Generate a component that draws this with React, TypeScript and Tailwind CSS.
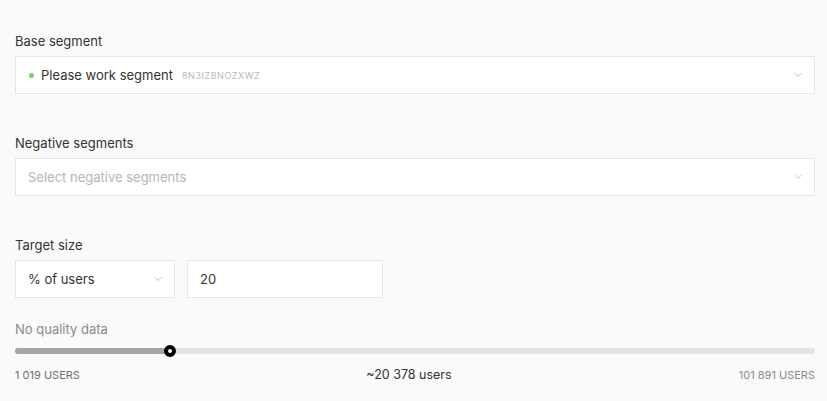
import { ChevronDown } from 'lucide-react'

const font = { fontFamily: 'Inter, "Noto Sans", sans-serif' }

function Label({ children, muted = false }: { children: React.ReactNode; muted?: boolean }) {
  return (
    <div className={`text-[13px] leading-4 mb-[7px] ${muted ? 'text-[#8a8a8a]' : 'text-[#333]'}`}>{children}</div>
  )
}

function SelectBox({ children, className = '' }: { children: React.ReactNode; className?: string }) {
  return (
    <div className={`h-[38px] flex items-center justify-between bg-white border border-[#e6e6e6] pl-3 pr-[10px] ${className}`}>
      <div className="flex items-center min-w-0 pt-px">{children}</div>
      <ChevronDown size={12} strokeWidth={1.5} className="text-[#a8a8a8] shrink-0" />
    </div>
  )
}

export default function App() {
  const pct = 19.4
  return (
    <div style={font} className="w-[827px] h-[401px] bg-[#fafafa] px-[15px] pt-[33px] text-[#333]">
      {/* base segment */}
      <Label>Base segment</Label>
      <SelectBox className="w-[800px]">
        <span className="w-[5px] h-[5px] rounded-full bg-[#7ccf73] mr-[7px] ml-[1px]" />
        <span className="text-[13px]">Please work segment</span>
        <span className="ml-[9px] text-[9px] tracking-[0.06em] text-[#b8b8b8]">8N3IZBNOZXWZ</span>
      </SelectBox>

      {/* negative segments */}
      <div className="mt-[41px]">
        <Label>Negative segments</Label>
        <SelectBox className="w-[800px]">
          <span className="text-[13px] text-[#b5b5b5]">Select negative segments</span>
        </SelectBox>
      </div>

      {/* target size */}
      <div className="mt-[41px]">
        <Label>Target size</Label>
        <div className="flex gap-3">
          <SelectBox className="w-[160px]">
            <span className="text-[13px]">% of users</span>
          </SelectBox>
          <div className="w-[196px] h-[38px] bg-white border border-[#e6e6e6] flex items-center pl-3 pt-px text-[13px]">20</div>
        </div>
      </div>

      {/* quality / slider */}
      <div className="mt-[23px]">
        <Label muted>No quality data</Label>
        <div className="relative w-[800px] h-[6px] rounded-full bg-[#e4e4e4] mt-[11px]">
          <div className="h-full rounded-full bg-[#a4a6a8]" style={{ width: `${pct}%` }} />
          <div
            className="absolute top-1/2 -translate-x-1/2 -translate-y-1/2 w-[12px] h-[12px] rounded-full bg-white border-[4px] border-black"
            style={{ left: `${pct}%` }}
          />
        </div>
        <div className="w-[800px] flex justify-between items-center mt-[12px]">
          <span className="text-[11px] text-[#6f6f6f] w-[150px]">1 019 USERS</span>
          <span className="text-[12.5px] text-[#333] mr-[12px]">~20 378 users</span>
          <span className="text-[11px] text-[#8a8a8a] w-[150px] text-right">101 891 USERS</span>
        </div>
      </div>
    </div>
  )
}
